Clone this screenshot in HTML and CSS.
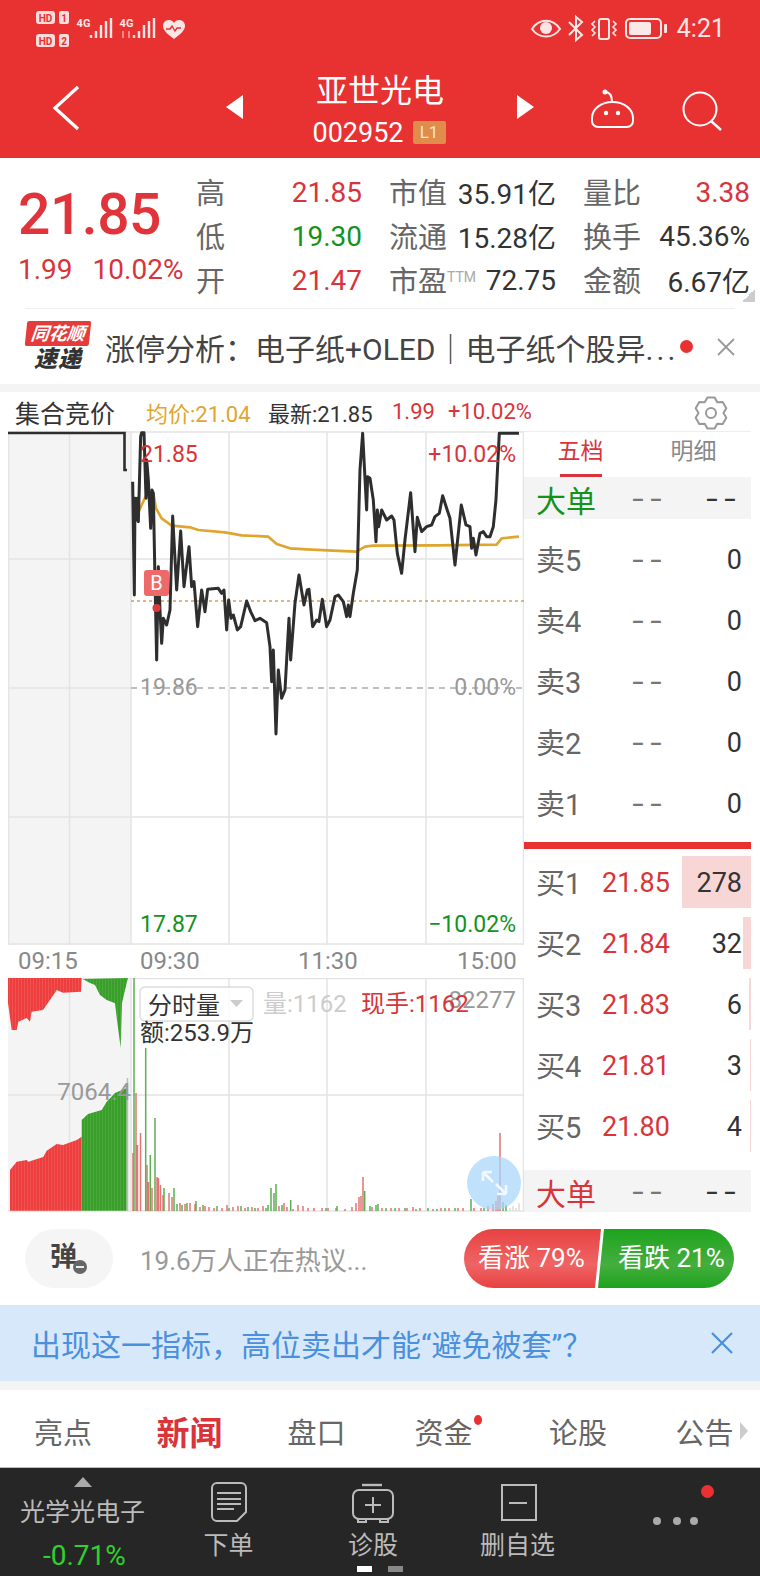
FILE: index.html
```html
<!DOCTYPE html>
<html lang="en">
<head>
    <meta charset="UTF-8">
    <meta name="viewport" content="width=device-width, initial-scale=1.0">
    <title>亚世光电</title>
    <link rel="stylesheet" href="styles.css">
</head>
<body>
<div class="page">

    <!-- Red top: status bar and stock title -->
    <div class="top">
        <div class="status">
            <svg class="status-left" width="200" height="56" viewBox="0 0 200 56">
                <rect x="36" y="11" width="19" height="13" rx="3" fill="#f9dcdc"/>
                <text class="hd" x="45.5" y="21.5">HD</text>
                <rect x="59" y="11" width="10" height="13" rx="2" fill="#f9dcdc"/>
                <text class="hd" x="64" y="21.5">1</text>
                <rect x="36" y="34" width="19" height="13" rx="3" fill="#f9dcdc"/>
                <text class="hd" x="45.5" y="44.5">HD</text>
                <rect x="59" y="34" width="10" height="13" rx="2" fill="#f9dcdc"/>
                <text class="hd" x="64" y="44.5">2</text>
                <text class="net" x="83.5" y="27">4G</text>
                <path d="M91 35v3M96 31v7M101 25v13M106 21v17M111 18v20" stroke="#fbe6e6" stroke-width="2.4" fill="none"/>
                <text class="net" x="126.5" y="27">4G</text>
                <path d="M134 35v3M139 31v7M144 25v13M149 21v17M154 18v20" stroke="#fbe6e6" stroke-width="2.4" fill="none"/>
                <path d="M123 31v7M129 31v7" stroke="#f5a0a0" stroke-width="1.6" fill="none"/>
                <path d="M174 39c-5-4-11-8-11-13 0-4 3-6 6-6 2 0 4 1 5 3 1-2 3-3 5-3 3 0 6 2 6 6 0 5-6 9-11 13z" fill="#fbe6e6"/>
                <path d="M166 29h4l2-3 3 5 2-3h4" stroke="#e83232" stroke-width="1.4" fill="none"/>
            </svg>
            <div class="status-right">
                <svg width="140" height="56" viewBox="532 0 140 56">
                    <path d="M535 29c7-11 21-11 28 0-7 10-21 10-28 0z" fill="none" stroke="#fbe6e6" stroke-width="2"/>
                    <circle cx="549" cy="28" r="6" fill="#fbe6e6"/>
                    <path d="M572 22l13 13-6 5V17l6 5-13 13" fill="none" stroke="#fbe6e6" stroke-width="2"/>
                    <rect x="602" y="19" width="10" height="20" rx="2" fill="none" stroke="#fbe6e6" stroke-width="2"/>
                    <path d="M598 21l-3 3 3 3-3 3 3 3-3 3M616 21l3 3-3 3 3 3-3 3 3 3" fill="none" stroke="#fbe6e6" stroke-width="1.6"/>
                    <rect x="629" y="19" width="35" height="19" rx="4" fill="none" stroke="#fbe6e6" stroke-width="2"/>
                    <rect x="632" y="22" width="22" height="13" rx="2" fill="#fde8e8"/>
                    <rect x="667" y="24" width="3" height="9" rx="1" fill="#fbe6e6"/>
                </svg>
                <span class="clock">4:21</span>
            </div>
        </div>
        <div class="nav">
            <svg class="nav-back" width="32" height="48" viewBox="0 0 32 48">
                <path d="M28 3L5 24l23 21" fill="none" stroke="#fff" stroke-width="3.2"/>
            </svg>
            <svg class="nav-prev" width="18" height="26" viewBox="0 0 18 26"><path d="M0 13L17 1v24z" fill="#fff"/></svg>
            <div class="title">
                <div class="title-name">亚世光电</div>
                <div class="title-code">002952<span class="badge">L1</span></div>
            </div>
            <svg width="18" height="26" viewBox="0 0 18 26"><path d="M1 1l17 12L1 25z" fill="#fff"/></svg>
            <svg class="nav-robot" width="46" height="44" viewBox="590 88 46 44">
                <path d="M592 118c0-9 9-16 20.500-16S633 109 633 118v3a6 6 0 0 1-6 6h-29a6 6 0 0 1-6-6z" fill="none" stroke="#fff" stroke-width="2"/>
                <path d="M605 92c4 0 7 3 7 10" fill="none" stroke="#fff" stroke-width="2"/>
                <circle cx="605" cy="92" r="2.500" fill="#fff"/>
                <circle cx="606" cy="113" r="2.200" fill="#fff"/>
                <circle cx="618" cy="113" r="2.200" fill="#fff"/>
            </svg>
            <svg class="nav-search" width="42" height="44" viewBox="682 84 42 44">
                <circle cx="700" cy="105" r="16.500" fill="none" stroke="#fff" stroke-width="2"/>
                <path d="M711 117l10 9" stroke="#fff" stroke-width="2.400"/>
            </svg>
        </div>
    </div>

    <!-- Quote block -->
    <div class="quote">
        <div class="price">
            <div class="price-now">21.85</div>
            <div class="price-sub"><span>1.99</span><span>10.02%</span></div>
        </div>
        <div class="stats">
            <div class="stat"><span class="stat-label">高</span><span class="up">21.85</span></div>
            <div class="stat"><span class="stat-label">市值</span><span>35.91亿</span></div>
            <div class="stat"><span class="stat-label">量比</span><span class="up">3.38</span></div>
            <div class="stat"><span class="stat-label">低</span><span class="down">19.30</span></div>
            <div class="stat"><span class="stat-label">流通</span><span>15.28亿</span></div>
            <div class="stat"><span class="stat-label">换手</span><span>45.36%</span></div>
            <div class="stat"><span class="stat-label">开</span><span class="up">21.47</span></div>
            <div class="stat"><span class="stat-label">市盈<sup class="ttm">TTM</sup></span><span>72.75</span></div>
            <div class="stat"><span class="stat-label">金额</span><span>6.67亿</span></div>
        </div>
        <div class="corner"></div>
    </div>

    <!-- Flash news row -->
    <div class="news">
        <div class="logo">
            <span class="logo-top">同花顺</span>
            <span class="logo-bottom">速递</span>
        </div>
        <div class="news-text">涨停分析：电子纸+OLED｜电子纸个股异<span class="ell">...</span></div>
        <span class="news-dot"></span>
        <svg class="news-close" width="18" height="18" viewBox="0 0 18 18"><path d="M1 1l16 16M17 1L1 17" stroke="#999" stroke-width="1.800"/></svg>
    </div>
    <div class="band"></div>

    <!-- Chart header -->
    <div class="chart-head">
        <span class="head-title">集合竞价</span>
        <span class="head-avg">均价:21.04</span>
        <span class="head-last">最新:21.85</span>
        <span class="head-up">1.99</span>
        <span class="head-up head-pct">+10.02%</span>
        <svg class="gear" width="36" height="36" viewBox="-18 -18 36 36">
            <path d="M-3.600-15.600L3.600-15.600 6.250-10.800 11.700-10.900 15.300-4.700 12.500 0 15.300 4.700 11.700 10.900 6.250 10.800 3.600 15.600-3.600 15.600-6.250 10.800-11.700 10.900-15.300 4.700-12.500 0-15.300-4.700-11.700-10.900-6.250-10.800z" fill="none" stroke="#999" stroke-width="2" stroke-linejoin="round"/>
            <circle r="5" fill="none" stroke="#999" stroke-width="2"/>
        </svg>
    </div>

    <div class="market">
        <div class="charts">
            <!-- Intraday price, viewBox uses page coordinates -->
            <svg class="price-chart" width="516" height="514" viewBox="8 431 516 514">
                <rect x="8" y="431" width="123" height="514" fill="#f4f4f4"/>
                <path class="grid" d="M8 432H524M8 559H524M8 688H131M8 817H524M8 944H524M8.500 431V945M69.500 431V945M131 431V945M229 431V945M327 431V945M426 431V945M523.500 431V945"/>
                <path d="M131 601H524" stroke="#dd9a55" stroke-width="1.600" stroke-dasharray="3 3" fill="none"/>
                <path d="M131 688H524" stroke="#aaa" stroke-width="1.600" stroke-dasharray="6 5" fill="none"/>
                <path d="M7 433H124.500V470H127" fill="none" stroke="#2e2e2e" stroke-width="2.600"/>
                <g transform="translate(120 430) scale(.3333)">
                    <polyline class="avg-line" points="45,270 58,240 72,210 82,190 100,190 108,235 125,265 155,287 210,292 235,300 315,307 365,316 445,320 470,342 510,355 560,358 640,362 710,365 735,350 760,347 950,346 1130,344 1145,325 1197,320"/>
                    <polyline class="price-line" points="38,155 43,495 45,205 50,270 52,205 55,275 62,20 65,8 72,8 78,205 80,90 85,150 92,295 96,180 100,190 105,450 110,690 115,410 120,540 125,640 130,565 140,585 150,540 158,258 170,480 182,303 192,470 207,350 215,470 222,455 233,590 245,480 255,545 263,478 295,475 305,490 312,480 320,600 326,510 333,565 340,555 352,600 362,590 380,513 392,545 405,572 420,565 440,578 450,650 455,755 460,660 468,912 475,720 485,805 495,780 507,565 512,690 525,520 537,435 552,525 562,480 567,478 578,590 590,570 597,575 607,508 620,590 630,570 645,500 655,495 670,515 680,560 685,525 690,560 700,490 712,420 720,120 728,10 740,240 743,140 750,145 760,210 768,335 772,240 776,290 785,240 800,270 815,258 822,270 832,370 845,430 855,330 872,188 885,365 892,262 905,305 920,290 935,285 945,260 958,250 968,197 980,235 990,265 1005,405 1024,225 1038,285 1050,290 1055,355 1060,325 1068,375 1080,310 1090,305 1100,320 1110,320 1120,290 1128,210 1138,10 1197,10"/>
                </g>
                <rect x="144" y="570" width="25" height="26" rx="3" fill="#ee6a6a"/>
                <text class="marker" x="156.500" y="590">B</text>
                <circle cx="156.500" cy="608" r="4" fill="#dd3a3a"/>
                <text class="lbl lbl-up" x="140" y="462">21.85</text>
                <text class="lbl lbl-up lbl-end" x="516" y="462">+10.02%</text>
                <text class="lbl lbl-flat" x="140" y="695">19.86</text>
                <text class="lbl lbl-flat lbl-end" x="516" y="695">0.00%</text>
                <text class="lbl lbl-down" x="140" y="932">17.87</text>
                <text class="lbl lbl-down lbl-end" x="516" y="932">−10.02%</text>
            </svg>

            <div class="times">
                <span>09:15</span><span>09:30</span><span>11:30</span><span>15:00</span>
            </div>

            <!-- Volume -->
            <svg class="volume-chart" width="516" height="237" viewBox="8 978 516 237">
                <defs>
                    <pattern id="stripeRed" width="3" height="4" patternUnits="userSpaceOnUse">
                        <rect width="3" height="4" fill="#ee3d3d"/><rect width="1" height="4" fill="#f05252"/>
                    </pattern>
                    <pattern id="stripeGreen" width="3" height="4" patternUnits="userSpaceOnUse">
                        <rect width="3" height="4" fill="#3a9f2a"/><rect width="1" height="4" fill="#4aa83c"/>
                    </pattern>
                </defs>
                <rect x="8" y="978" width="123" height="233" fill="#f4f4f4"/>
                <path class="grid" d="M8 978.500H524M8 1095H524M8 1211H524M69.500 978V1211M131 978V1211M229 978V1211M327 978V1211M426 978V1211M523.500 978V1211"/>
                <path fill="url(#stripeRed)" d="M8 978V1003L11.700 1030H16.700L18.300 1021.700 26.700 1018 30 1021.700 31.700 1011.700 43 1010 50 1000 56.700 990 63 992.700 81 991.700 81.700 978z"/>
                <path fill="url(#stripeGreen)" d="M82.700 979L90 983 95 985 100 995 106.700 1000 115 1003.300 117 1020 120.700 1048 122 1003 126.700 983 128 978z"/>
                <path fill="url(#stripeRed)" d="M10 1170L16.700 1161.700 26.700 1160 28.300 1161.700 43.300 1157 46.700 1150.700 56.700 1144 63 1145 76.700 1140 81.700 1136.700V1210.700H10z"/>
                <path fill="url(#stripeGreen)" d="M81.700 1120L88 1114 101.700 1110 106.700 1101.700 115 1093 126.700 1088V1210.700H81.700z"/>
                <path d="M127.500 1078V1211" stroke="#bbb" stroke-width="1.500"/>
                <path class="bars-red" d="M133 1153V1211M136 1093V1211M137.500 1145V1211M140.500 1133V1211M147 1165V1211M148.500 1182V1211M152 1188V1211M157 1177V1211M158.500 1178V1211M160.500 1185V1211M163 1195V1211M169 1193V1211M172 1197V1211M180 1203V1211M185 1204V1211M190 1203V1211M195 1204V1211M200 1207V1211M205 1206V1211M209 1207V1211M214 1208V1211M222 1208V1211M227 1205V1211M233 1207V1211M238 1206V1211M245 1208V1211M252 1207V1211M258 1208V1211M263 1206V1211M279 1206V1211M284 1203V1211M287 1207V1211M293 1209V1211M298 1205V1211M303 1206V1211M308 1208V1211M314 1208V1211M322 1208V1211M328 1208V1211M336 1208V1211M345 1209V1211M352 1207V1211M356 1203V1211M359 1197V1211M361 1196V1211M363 1177V1211M372 1207V1211M382 1208V1211M391 1208V1211M399 1208V1211M407 1208V1211M413 1207V1211M420 1208V1211M433 1209V1211M441 1208V1211M449 1208V1211M458 1208V1211M463 1208V1211M474 1208V1211M481 1208V1211M488 1206V1211M493 1204V1211M496 1201V1211M498 1195V1211M500 1133V1211"/>
                <path class="bars-green" d="M134 978V1211M145.700 1048V1211M150.300 1155V1211M155 1118V1211M164 1188V1211M174 1188V1211M177 1204V1211M182 1205V1211M187 1203V1211M196 1201V1211M203 1205V1211M217 1206V1211M229 1208V1211M241 1206V1211M248 1207V1211M255 1208V1211M266 1208V1211M268 1205V1211M271 1188V1211M274 1193V1211M276 1184V1211M282 1205V1211M290.700 1200V1211M326 1208V1211M337 1206V1211M364.700 1191V1211M370 1206V1211M376 1205V1211M378 1204V1211M386 1208V1211M395 1208V1211M405 1208V1211M416 1209V1211M428 1208V1211M437 1209V1211M445 1208V1211M455 1208V1211M471 1199V1211M484 1208V1211M503 1202V1211M506 1205V1211"/>
                <path d="M510 1208V1211M513 1206V1211M516 1208V1211M519 1203V1211" stroke="#ddd" stroke-width="1.500"/>
                <circle cx="494" cy="1183" r="27" fill="#a8d6fb" fill-opacity=".72"/>
                <path d="M483 1172l10 10M483 1172h9M483 1172v9M506 1194l-10-10M506 1194h-9M506 1194v-9" fill="none" stroke="#f2f8ff" stroke-width="2.600"/>
                <rect x="140" y="987" width="113" height="34" rx="5" fill="#fff" fill-opacity=".85" stroke="#ddd" stroke-width="1.500"/>
                <text class="vol vol-dark" x="148" y="1014">分时量</text>
                <path d="M230 1000h13l-6.500 7z" fill="#ccc"/>
                <text class="vol vol-dark" x="140" y="1041">额:253.9万</text>
                <text class="vol vol-light" x="263" y="1012">量:1162</text>
                <text class="vol vol-gray vol-end" x="516" y="1008">82277</text>
                <text class="vol vol-red" x="361" y="1012">现手:1162</text>
                <text class="vol vol-gray vol-end vol-big" x="131" y="1100">7064.4</text>
            </svg>
        </div>

        <!-- Order book -->
        <div class="book">
            <div class="book-tabs">
                <span class="book-tab book-tab-on">五档</span>
                <span class="book-tab">明细</span>
            </div>
            <div class="book-row big big-buy"><span>大单</span><span class="dash">--</span><span class="dash dash-dark">--</span></div>
            <div class="asks">
                <div class="book-row"><span class="side">卖5</span><span class="dash">--</span><span>0</span></div>
                <div class="book-row"><span class="side">卖4</span><span class="dash">--</span><span>0</span></div>
                <div class="book-row"><span class="side">卖3</span><span class="dash">--</span><span>0</span></div>
                <div class="book-row"><span class="side">卖2</span><span class="dash">--</span><span>0</span></div>
                <div class="book-row"><span class="side">卖1</span><span class="dash">--</span><span>0</span></div>
            </div>
            <div class="book-sep"></div>
            <div class="bids">
                <div class="book-row"><i class="qty-bar" style="width:69px"></i><span class="side">买1</span><span class="up">21.85</span><span>278</span></div>
                <div class="book-row"><i class="qty-bar" style="width:8px"></i><span class="side">买2</span><span class="up">21.84</span><span>32</span></div>
                <div class="book-row"><i class="qty-bar" style="width:2px"></i><span class="side">买3</span><span class="up">21.83</span><span>6</span></div>
                <div class="book-row"><i class="qty-bar" style="width:1px"></i><span class="side">买4</span><span class="up">21.81</span><span>3</span></div>
                <div class="book-row"><i class="qty-bar" style="width:1px"></i><span class="side">买5</span><span class="up">21.80</span><span>4</span></div>
            </div>
            <div class="book-row big big-sell"><span>大单</span><span class="dash">--</span><span class="dash dash-dark">--</span></div>
        </div>
    </div>

    <!-- Comment bar and vote -->
    <div class="opinion">
        <div class="danmu">弹<span class="danmu-off"></span></div>
        <div class="opinion-text">19.6万人正在热议...</div>
        <div class="vote">
            <div class="vote-up">看涨 79%</div>
            <div class="vote-down">看跌 21%</div>
        </div>
    </div>

    <div class="ad">
        <span>出现这一指标，高位卖出才能“避免被套”？</span>
        <svg width="22" height="22" viewBox="0 0 22 22"><path d="M1 1l20 20M21 1L1 21" stroke="#4a90dc" stroke-width="2.200"/></svg>
    </div>
    <div class="band band-low"></div>

    <div class="tabs">
        <span class="tab">亮点</span>
        <span class="tab tab-on">新闻</span>
        <span class="tab">盘口</span>
        <span class="tab"><span class="tab-inner">资金<i class="tab-dot"></i></span></span>
        <span class="tab">论股</span>
        <span class="tab"><span class="tab-inner">公告<i class="tab-more"></i></span></span>
    </div>

    <!-- Bottom action bar -->
    <div class="bottom">
        <div class="sector">
            <i class="sector-arrow"></i>
            <div class="sector-name">光学光电子</div>
            <div class="sector-pct">-0.71%</div>
        </div>
        <div class="action">
            <svg width="40" height="44" viewBox="208 1480 40 44">
                <path d="M216 1483h24a5 5 0 0 1 5 5v24l-9 9h-20a5 5 0 0 1-5-5v-28a5 5 0 0 1 5-5z" fill="none" stroke="#bbb" stroke-width="2"/>
                <path d="M216 1493h24M216 1499h24M216 1504h24M216 1509h17" stroke="#bbb" stroke-width="2"/>
            </svg>
            <span>下单</span>
        </div>
        <div class="action">
            <svg width="46" height="44" viewBox="350 1480 46 44">
                <path d="M362 1485h20" stroke="#bbb" stroke-width="2.400"/>
                <rect x="353" y="1490" width="40" height="29" rx="6" fill="none" stroke="#bbb" stroke-width="2"/>
                <path d="M358 1519v3h8v-3M380 1519v3h8v-3M373 1497v16M365 1505h16" fill="none" stroke="#bbb" stroke-width="2"/>
            </svg>
            <span>诊股</span>
        </div>
        <div class="action">
            <svg width="40" height="44" viewBox="497 1480 40 44">
                <rect x="501" y="1485" width="34" height="35" fill="none" stroke="#bbb" stroke-width="2"/>
                <path d="M508 1503h18" stroke="#bbb" stroke-width="2"/>
            </svg>
            <span>删自选</span>
        </div>
        <div class="more">
            <i class="more-dot"></i>
            <svg width="48" height="16" viewBox="0 0 48 16"><circle cx="6" cy="8" r="4" fill="#aaa"/><circle cx="26" cy="8" r="4" fill="#aaa"/><circle cx="43" cy="8" r="4" fill="#aaa"/></svg>
        </div>
        <div class="pager"><i class="pager-on"></i><i></i></div>
    </div>
</div>
</body>
</html>
```

FILE: styles.css
```css
* {
    box-sizing: border-box;
}
body {
    margin: 0;
    font-family: Roboto, "Noto Sans CJK SC", sans-serif;
    color: #333;
    background: #fff;
}
.page {
    position: relative;
    width: 760px;
    height: 1576px;
    overflow: hidden;
}
.up { color: #d8343a; }
.down { color: #12931c; }

/* Top */
.top {
    height: 158px;
    background-color: #e83232;
    color: #fff;
}
.status {
    display: flex;
    justify-content: space-between;
    height: 56px;
}
.status svg {
    display: block;
}
.hd {
    font-size: 10px;
    font-weight: 700;
    fill: #e83232;
    text-anchor: middle;
}
.net {
    font-size: 11px;
    font-weight: 700;
    fill: #fbe6e6;
    text-anchor: middle;
}
.status-right {
    display: flex;
    align-items: center;
    padding-right: 35px;
}
.clock {
    margin-left: 8px;
    font-size: 25px;
    color: #fbe6e6;
}
.nav {
    display: flex;
    align-items: center;
    height: 102px;
    padding-left: 50px;
}
.nav-back {
    margin-top: 2px;
}
.nav-prev {
    margin-left: 144px;
}
.title {
    width: 272px;
    text-align: center;
}
.title-name {
    font-size: 32px;
    line-height: 44px;
    margin-top: 7px;
}
.title-code {
    display: flex;
    align-items: center;
    justify-content: center;
    font-size: 27px;
    line-height: 40px;
    margin-left: -2px;
}
.badge {
    margin-left: 9px;
    width: 33px;
    height: 23px;
    background-color: #e08c4a;
    border-radius: 2px;
    color: #fbe3cf;
    font-size: 17px;
    line-height: 23px;
}
.nav-robot {
    margin-left: 56px;
    margin-top: 6px;
}
.nav-search {
    margin-left: 46px;
    margin-top: 6px;
}

/* Quote */
.quote {
    position: relative;
    display: flex;
    height: 150px;
    padding: 12px 9px 0 18px;
}
.price {
    width: 178px;
}
.price-now {
    font-size: 57px;
    font-weight: 500;
    line-height: 68px;
    color: #e0343a;
    margin-top: 11px;
    letter-spacing: -.5px;
}
.price-sub {
    display: flex;
    gap: 20px;
    margin-top: 3px;
    font-size: 28px;
    line-height: 36px;
    color: #d8343a;
    white-space: nowrap;
}
.stats {
    display: grid;
    grid-template-columns: 166px 167px 167px;
    grid-auto-rows: 44px;
    column-gap: 27px;
    font-size: 28px;
}
.stat {
    display: flex;
    align-items: center;
    justify-content: space-between;
    white-space: nowrap;
}
.stat-label {
    color: #666;
    font-size: 29px;
    margin-top: -2px;
}
.ttm {
    font-size: 14px;
    color: #aaa;
    vertical-align: 10px;
    line-height: 0;
}
.corner {
    position: absolute;
    right: 5px;
    bottom: 6px;
    width: 13px;
    height: 13px;
    background: linear-gradient(135deg, transparent 50%, #ccc 50%);
}

/* News */
.news {
    display: flex;
    align-items: center;
    height: 76px;
    margin: 0 25px;
    border-top: 1px solid #eee;
}
.logo {
    width: 64px;
    text-align: center;
    margin-left: 1px;
}
.logo-top {
    display: block;
    background-color: #e63b3b;
    color: #fff;
    font-size: 18px;
    font-weight: 700;
    font-style: italic;
    line-height: 25px;
    transform: skewX(-6deg);
    border-radius: 2px;
}
.logo-bottom {
    display: block;
    font-size: 23px;
    font-weight: 900;
    font-style: italic;
    line-height: 27px;
    letter-spacing: 1px;
    color: #333;
}
.news-text {
    width: 588px;
    margin-left: 15px;
    font-size: 30px;
    color: #444;
    white-space: nowrap;
    overflow: hidden;
}
.ell {
    letter-spacing: 3px;
}
.news-dot {
    width: 13px;
    height: 13px;
    margin-left: -13px;
    border-radius: 50%;
    background-color: #e83232;
}
.news-close {
    margin-left: 24px;
}
.band {
    height: 8px;
    background-color: #f4f4f4;
}
.band-low {
    height: 9px;
}

/* Chart */
.chart-head {
    position: relative;
    display: flex;
    align-items: center;
    height: 39px;
    padding-left: 15px;
    font-size: 22px;
    white-space: nowrap;
}
.head-title {
    width: 131px;
    font-size: 25px;
    color: #333;
}
.head-avg {
    width: 122px;
    color: #e0a52e;
}
.head-last {
    width: 124px;
    color: #333;
}
.head-up {
    width: 56px;
    color: #d8343a;
}
.head-pct {
    width: auto;
}
.gear {
    position: absolute;
    left: 693px;
    top: 3px;
}
.market {
    display: flex;
    height: 784px;
}
.charts {
    width: 516px;
    margin-left: 8px;
}
.charts svg {
    display: block;
}
.grid {
    fill: none;
    stroke: #e4e4e4;
    stroke-width: 1.500;
}
.price-line {
    fill: none;
    stroke: #2e2e2e;
    stroke-width: 9;
    stroke-linejoin: round;
}
.avg-line {
    fill: none;
    stroke: #e0a52e;
    stroke-width: 8;
    stroke-linejoin: round;
}
.marker {
    font-size: 20px;
    fill: #fff;
    text-anchor: middle;
}
.lbl {
    font-size: 23px;
}
.lbl-end {
    text-anchor: end;
}
.lbl-up { fill: #d8343a; }
.lbl-flat { fill: #999; }
.lbl-down { fill: #12931c; }
.times {
    display: grid;
    grid-template-columns: 122px 158px 159px auto;
    height: 33px;
    padding-left: 10px;
    font-size: 24px;
    line-height: 33px;
    color: #888;
}
.bars-red {
    fill: none;
    stroke: #e27474;
    stroke-width: 1.500;
}
.bars-green {
    fill: none;
    stroke: #5cb050;
    stroke-width: 1.500;
}
.vol {
    font-size: 24px;
}
.vol-dark { fill: #333; }
.vol-light { fill: #ccc; }
.vol-gray { fill: #999; }
.vol-red { fill: #d8343a; }
.vol-end { text-anchor: end; }

/* Order book */
.book {
    width: 227px;
    font-size: 27px;
}
.book-tabs {
    display: flex;
    height: 46px;
    border-top: 1px solid #eee;
}
.book-tab {
    width: 113px;
    text-align: center;
    font-size: 23px;
    line-height: 40px;
    color: #888;
}
.book-tab-on {
    position: relative;
    color: #d8343a;
}
.book-tab-on::after {
    content: "";
    position: absolute;
    left: 36px;
    bottom: 0;
    width: 42px;
    height: 3px;
    background-color: #d8343a;
}
.book-row {
    position: relative;
    display: grid;
    grid-template-columns: 66px 66px 1fr;
    align-items: center;
    height: 61px;
    padding: 0 9px 0 12px;
}
.book-row span {
    position: relative;
    white-space: nowrap;
}
.book-row span:nth-of-type(2),
.book-row span:nth-of-type(3) {
    text-align: right;
}
.side {
    color: #666;
    font-size: 29px;
    margin-top: -4px;
}
.dash {
    font-size: 42px;
    font-weight: 300;
    letter-spacing: 6px;
    line-height: 30px;
    color: #777;
}
.dash-dark {
    color: #333;
}
.big {
    height: 42px;
    padding-bottom: 8px;
    background-color: #f4f4f4;
    font-size: 30px;
}
.big-buy { color: #12931c; }
.big-sell { color: #d8343a; }
.asks {
    padding-top: 10px;
}
.book-sep {
    height: 7px;
    margin: 8px 0 3px;
    background-color: #e83232;
}
.bids {
    margin-bottom: 13px;
}
.qty-bar {
    position: absolute;
    top: 4px;
    bottom: 5px;
    right: 0;
    background-color: #f9d6d6;
}

/* Opinion */
.opinion {
    display: flex;
    align-items: center;
    height: 90px;
    padding: 0 26px 3px 25px;
}
.danmu {
    position: relative;
    width: 88px;
    height: 59px;
    border-radius: 30px;
    background-color: #f5f5f5;
    font-size: 27px;
    font-weight: 700;
    line-height: 57px;
    padding-left: 25px;
    color: #444;
}
.danmu-off {
    position: absolute;
    left: 48px;
    top: 31px;
    width: 14px;
    height: 14px;
    border-radius: 50%;
    background: linear-gradient(#eee, #eee) center / 8px 2px no-repeat #666;
}
.opinion-text {
    width: 351px;
    padding-left: 27px;
    font-size: 26px;
    color: #999;
    white-space: nowrap;
}
.vote {
    display: flex;
    width: 270px;
    height: 59px;
    color: #fff;
    font-size: 26px;
    line-height: 59px;
    white-space: nowrap;
}
.vote-up {
    width: 137px;
    padding-left: 14px;
    border-radius: 30px 0 0 30px;
    background: linear-gradient(#e84242, #ef6464 60%, #e84242);
    clip-path: polygon(0 0, 100% 0, calc(100% - 6px) 100%, 0 100%);
}
.vote-down {
    width: 137px;
    margin-left: -4px;
    padding-left: 21px;
    border-radius: 0 30px 30px 0;
    background: linear-gradient(#1ea31e, #45ae3e 60%, #1ea31e);
    clip-path: polygon(7px 0, 100% 0, 100% 100%, 1px 100%);
}

/* Ad */
.ad {
    display: flex;
    align-items: center;
    justify-content: space-between;
    height: 76px;
    padding: 0 27px 0 31px;
    background-color: #d8e8fb;
    color: #4a90dc;
    font-size: 30px;
}

/* Tabs */
.tabs {
    display: grid;
    grid-template-columns: 126px 127px 127px 127px 142px 111px;
    align-items: center;
    height: 78px;
    padding-top: 5px;
    border-bottom: 1px solid #bbb;
    font-size: 29px;
    color: #666;
    text-align: center;
}
.tab-on {
    font-size: 33px;
    font-weight: 700;
    color: #d8343a;
}
.tab-inner {
    position: relative;
    display: inline-block;
}
.tab-dot {
    position: absolute;
    right: -9px;
    top: 5px;
    width: 8px;
    height: 10px;
    border-radius: 50%;
    background-color: #e83232;
}
.tab-more {
    position: absolute;
    right: -14px;
    top: 12px;
    border-left: 8px solid #ccc;
    border-top: 9px solid transparent;
    border-bottom: 9px solid transparent;
}

/* Bottom bar */
.bottom {
    position: relative;
    display: grid;
    grid-template-columns: 156px 145px 144px 145px 170px;
    height: 108px;
    background-color: #262626;
    color: #bbb;
    font-size: 25px;
}
.sector {
    position: relative;
    padding-left: 20px;
    white-space: nowrap;
}
.sector-arrow {
    position: absolute;
    left: 74px;
    top: 9px;
    border-bottom: 10px solid #aaa;
    border-left: 9px solid transparent;
    border-right: 9px solid transparent;
}
.sector-name {
    margin-top: 28px;
    line-height: 34px;
}
.sector-pct {
    margin: 9px 0 0 23px;
    font-size: 28px;
    line-height: 34px;
    color: #2fd02f;
}
.action {
    display: flex;
    flex-direction: column;
    align-items: center;
    padding-top: 12px;
}
.action svg {
    height: 44px;
    display: block;
}
.action span {
    margin-top: 5px;
    line-height: 34px;
}
.more {
    position: relative;
    padding: 45px 0 0 61px;
}
.more svg {
    display: block;
}
.more-dot {
    position: absolute;
    left: 111px;
    top: 17px;
    width: 13px;
    height: 13px;
    border-radius: 50%;
    background-color: #e83232;
}
.pager {
    position: absolute;
    left: 357px;
    bottom: 4px;
    display: flex;
    gap: 16px;
}
.pager i {
    width: 15px;
    height: 6px;
    background-color: #888;
}
.pager .pager-on {
    background-color: #fff;
}
```
